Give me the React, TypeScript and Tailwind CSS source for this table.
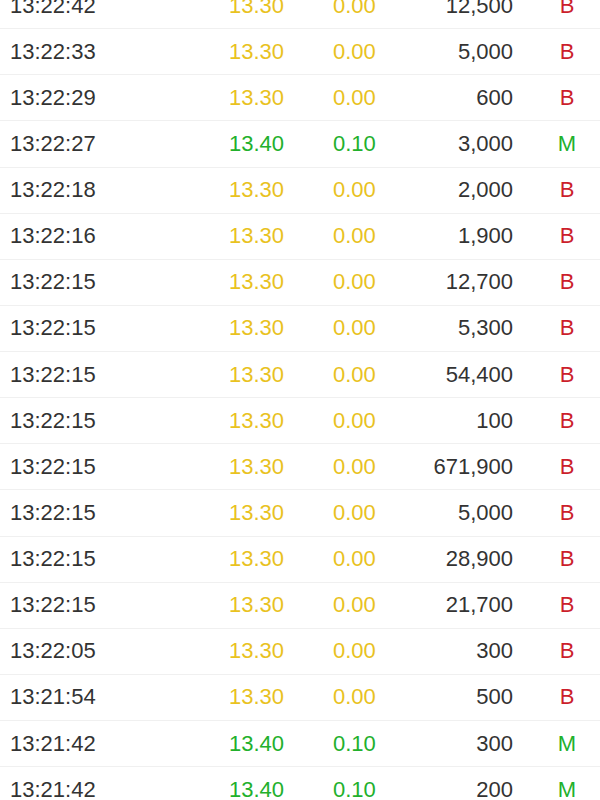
const rows: [string, string, string, string, string][] = [
  ["13:22:42", "13.30", "0.00", "12,500", "B"],
  ["13:22:33", "13.30", "0.00", "5,000", "B"],
  ["13:22:29", "13.30", "0.00", "600", "B"],
  ["13:22:27", "13.40", "0.10", "3,000", "M"],
  ["13:22:18", "13.30", "0.00", "2,000", "B"],
  ["13:22:16", "13.30", "0.00", "1,900", "B"],
  ["13:22:15", "13.30", "0.00", "12,700", "B"],
  ["13:22:15", "13.30", "0.00", "5,300", "B"],
  ["13:22:15", "13.30", "0.00", "54,400", "B"],
  ["13:22:15", "13.30", "0.00", "100", "B"],
  ["13:22:15", "13.30", "0.00", "671,900", "B"],
  ["13:22:15", "13.30", "0.00", "5,000", "B"],
  ["13:22:15", "13.30", "0.00", "28,900", "B"],
  ["13:22:15", "13.30", "0.00", "21,700", "B"],
  ["13:22:05", "13.30", "0.00", "300", "B"],
  ["13:21:54", "13.30", "0.00", "500", "B"],
  ["13:21:42", "13.40", "0.10", "300", "M"],
  ["13:21:42", "13.40", "0.10", "200", "M"],
];

function TradeRow({ row }: { row: [string, string, string, string, string] }) {
  const [time, price, change, volume, side] = row;
  const up = change !== "0.00";
  const priceColor = up ? "text-[#22b02c]" : "text-[#e9c21f]";
  const sideColor = side === "M" ? "text-[#22b02c]" : "text-[#cc1e2c]";
  return (
    <div className="flex items-center h-[46.125px] border-b border-[#f0f0f0] pl-[10px] text-[22px] leading-none">
      <div className="w-[190px] text-[#333333]">{time}</div>
      <div className={`w-[84px] text-right ${priceColor}`}>{price}</div>
      <div className="w-[49px]" />
      <div className={`w-[100px] ${priceColor}`}>{change}</div>
      <div className="w-[80px] text-right text-[#333333]">{volume}</div>
      <div className="w-[34px]" />
      <div className={`w-[40px] text-center ${sideColor}`}>{side}</div>
    </div>
  );
}

export default function App() {
  return (
    <div
      className="w-[600px] h-[800px] overflow-hidden bg-white"
      style={{ fontFamily: '"Liberation Sans", Arial, sans-serif' }}
    >
      <div className="-mt-[17px]">
        {rows.map((r, i) => (
          <TradeRow key={i} row={r} />
        ))}
      </div>
    </div>
  );
}
